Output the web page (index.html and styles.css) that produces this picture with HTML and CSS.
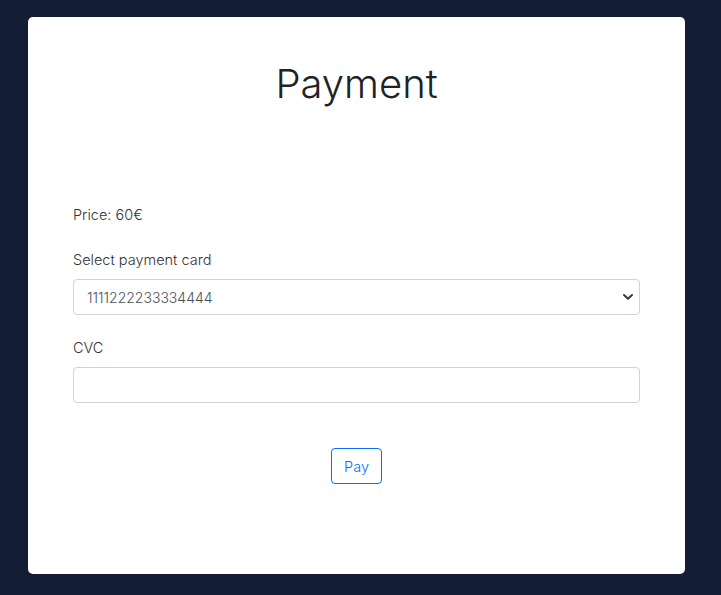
FILE: index.html
```html
<!DOCTYPE html>
<html lang="en">
<head>
  <meta charset="UTF-8">
  <title>Payment</title>
  <link rel="stylesheet" href="styles.css">
</head>
<body>

  <div class="card">
    <h1>Payment</h1>

    <p class="price">Price: 60€</p>

    <label for="card">Select payment card</label>
    <div class="select-wrap">
      <select id="card">
        <option>1111222233334444</option>
      </select>
      <svg class="chevron" width="12" height="8" viewBox="0 0 12 8">
        <path d="M2 2 L6 5.8 L10 2" fill="none" stroke="#343a40" stroke-width="2" stroke-linecap="round" stroke-linejoin="round"/>
      </svg>
    </div>

    <label for="cvc">CVC</label>
    <input type="text" id="cvc">

    <div class="actions">
      <button>Pay</button>
    </div>
  </div>

</body>
</html>
```

FILE: styles.css
```css
body {
  margin: 0;
  padding: 17px 36px 21px 28px;
  background: #131d35;
  font-family: Inter, "Noto Sans", sans-serif;
  color: #333;
}
.card {
  background: white;
  border-radius: 5px;
  padding: 43px 45px 90px;
  display: flex;
  flex-direction: column;
}
h1 {
  margin: 0;
  text-align: center;
  font-size: 40px;
  font-weight: 300;
  line-height: 48px;
  color: #222;
}
.price {
  margin: 96px 0 0;
  font-size: 14.5px;
  line-height: 22px;
  font-weight: 300;
}
label {
  margin-top: 23px;
  font-size: 14.5px;
  line-height: 22px;
  font-weight: 300;
}
.select-wrap {
  position: relative;
  margin-top: 8px;
}
select,
input {
  box-sizing: border-box;
  width: 100%;
  height: 36px;
  padding: 0 12px;
  border: 1px solid #ced4da;
  border-radius: 4px;
  background: white;
  font-family: inherit;
  font-size: 14px;
  font-weight: 300;
  color: #495057;
}
select {
  appearance: none;
  -webkit-appearance: none;
  padding-left: 13px;
}
.chevron {
  position: absolute;
  right: 6px;
  top: 14px;
  pointer-events: none;
}
input {
  margin-top: 8px;
}
label[for="cvc"] {
  margin-top: 22px;
}
.actions {
  display: flex;
  justify-content: center;
  margin-top: 45px;
}
button {
  height: 36px;
  padding: 0 12px;
  background: white;
  border: 1px solid #0d6efd;
  border-radius: 4px;
  color: #0d6efd;
  font-family: inherit;
  font-size: 14.5px;
  font-weight: 300;
  cursor: pointer;
}
```
